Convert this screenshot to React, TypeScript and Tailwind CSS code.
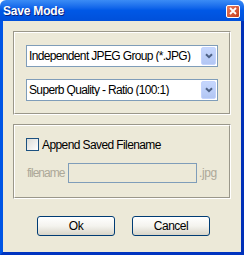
function Combo({ label }: { label: string }) {
    return (
        <div className="flex h-[22px] items-center border border-[#7f9db9] bg-white">
            <span className="flex-1 truncate pl-[2px] text-[12px] leading-none tracking-[-0.65px] text-black">{label}</span>
            <span className="mr-px flex h-[18px] w-[15px] items-center justify-center rounded-[2px] border border-[#c3d3fd] bg-gradient-to-b from-[#c6d7fd] to-[#b2c6f3]">
                <svg width="8" height="6" viewBox="0 0 8 6">
                    <path d="M1 1.2 L4 4.2 L7 1.2" fill="none" stroke="#4d6185" strokeWidth="2" />
                </svg>
            </span>
        </div>
    );
}

function Group({ children, className }: { children: React.ReactNode; className?: string }) {
    // etched frame: dark outer top/left, white everything else
    return (
        <div className={`border-t border-l border-[#9a978a] border-r-white border-b-white border-r border-b ${className ?? ''}`}>
            <div className="border-t border-l border-white border-r border-b border-r-[#9a978a] border-b-[#9a978a] px-[11px]">
                {children}
            </div>
        </div>
    );
}

export default function App() {
    return (
        <div className="flex h-[255px] w-[244px] flex-col font-['Liberation_Sans',Arial,sans-serif]">
            {/* Title bar */}
            <div className="flex h-[21px] items-center justify-between rounded-t-[6px] bg-gradient-to-b from-[#3b8cf5] via-[#0058e6] to-[#0050da] pl-[3px] pr-[4px]">
                <span className="pt-px text-[12px] font-bold tracking-[-0.2px] text-white [text-shadow:1px_1px_0_#0a1e7a]">Save Mode</span>
                <span className="mt-px flex h-[13px] w-[14px] items-center justify-center rounded-[2px] border border-white bg-gradient-to-br from-[#e87b5c] to-[#c73b16]">
                    <svg width="8" height="8" viewBox="0 0 8 8">
                        <path d="M1 1 L7 7 M7 1 L1 7" stroke="white" strokeWidth="1.8" />
                    </svg>
                </span>
            </div>

            {/* Body */}
            <div className="flex flex-1 flex-col border-x-[3px] border-b-[3px] border-l-[#0055e5] border-r-[#0030b8] border-b-[#0034c0] bg-[#ece9d8] px-[10px] pt-[10px]">
                <Group>
                    <div className="flex flex-col gap-[12px] pt-[12px] pb-[12px]">
                        <Combo label="Independent JPEG Group (*.JPG)" />
                        <Combo label="Superb Quality - Ratio (100:1)" />
                    </div>
                </Group>

                <Group className="mt-[9px]">
                    <div className="flex flex-col pt-[12px] pb-[14px]">
                        <label className="flex items-center gap-[3px]">
                            <span className="h-[13px] w-[13px] border border-[#1c5180] bg-gradient-to-br from-[#dcdcd7] to-white" />
                            <span className="text-[12px] leading-none tracking-[-0.6px] text-black">Append Saved Filename</span>
                        </label>
                        <div className="mt-[12px] flex items-center">
                            <span className="w-[42px] pl-px text-[12px] leading-none tracking-[-1px] text-[#aca899]">filename</span>
                            <span className="h-[20px] w-[129px] border border-[#7f9db9] bg-[#ece9d8]" />
                            <span className="pl-[2px] text-[12px] leading-none tracking-[-0.4px] text-[#aca899]">.jpg</span>
                        </div>
                    </div>
                </Group>

                <div className="mt-[17px] flex justify-center gap-[17px] pl-[3px]">
                    <button className="h-[20px] w-[78px] rounded-[3px] border border-[#003c74] bg-gradient-to-b from-white via-[#f4f3ee] to-[#d8d5c9] text-[12px] leading-none tracking-[-0.5px] text-black">Ok</button>
                    <button className="h-[20px] w-[78px] rounded-[3px] border border-[#003c74] bg-gradient-to-b from-white via-[#f4f3ee] to-[#d8d5c9] text-[12px] leading-none tracking-[-0.5px] text-black">Cancel</button>
                </div>
            </div>
        </div>
    );
}
